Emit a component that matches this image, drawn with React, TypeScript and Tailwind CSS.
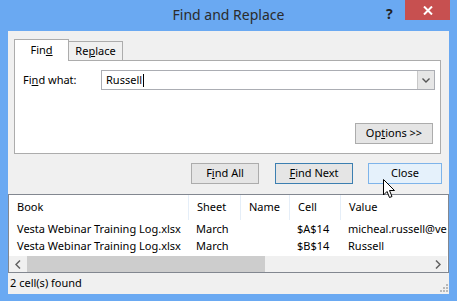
import React from "react";

const rows = [
  { book: "Vesta Webinar Training Log.xlsx", sheet: "March", name: "", cell: "$A$14", value: "micheal.russell@vesta.com" },
  { book: "Vesta Webinar Training Log.xlsx", sheet: "March", name: "", cell: "$B$14", value: "Russell" },
];

const cols = [
  { label: "Book", w: "w-[180px]" },
  { label: "Sheet", w: "w-[52px]" },
  { label: "Name", w: "w-[49px]" },
  { label: "Cell", w: "w-[51px]" },
  { label: "Value", w: "w-[120px]" },
];

const FindReplace: React.FC = () => {
  return (
    <div className="w-[457px] h-[301px] bg-[#6aa9f2] flex flex-col font-['Noto_Sans',sans-serif] text-[11px] text-black overflow-hidden">
      {/* Title bar */}
      <div className="relative h-[31px] flex items-center justify-center">
        <span className="text-[14px] text-[#2b2b2b] pb-[2px]">Find and Replace</span>
        <span className="absolute left-[386px] top-[3px] text-[14px] font-bold text-[#222]">?</span>
        <div className="absolute left-[405px] top-0 w-[45px] h-[20px] bg-[#c75050] flex items-center justify-center">
          <svg width="10" height="9" viewBox="0 0 10 9">
            <path d="M1 0.5 L9 8.5 M9 0.5 L1 8.5" stroke="white" strokeWidth="2" />
          </svg>
        </div>
      </div>

      {/* Client area */}
      <div className="mx-[8px] mb-[7px] flex-1 bg-[#f0f0f0] flex flex-col">
        {/* Tabs */}
        <div className="flex items-end ml-[6px] mt-[7px] mr-[8px]">
          <div className="w-[55px] h-[22px] bg-white border border-b-0 border-[#acacac] flex items-center justify-center relative top-[1px] z-10">
            <span>Fin<u>d</u></span>
          </div>
          <div className="w-[54px] h-[19px] bg-[#f0f0f0] border border-l-0 border-b-0 border-[#acacac] flex items-center justify-center">
            <span>Re<u>p</u>lace</span>
          </div>
        </div>
        <div className="ml-[6px] mr-[8px] h-[94px] bg-white border border-[#acacac] flex flex-col">
          <div className="flex items-center mt-[9px]">
            <span className="ml-[8px] w-[78px]">Fi<u>n</u>d what:</span>
            <div className="w-[334px] h-[20px] border border-[#abadb3] flex items-center bg-white">
              <span className="ml-[4px]">Russell</span>
              <span className="w-[1px] h-[13px] bg-black ml-[1px]" />
              <div className="ml-auto w-[17px] h-full bg-[#e6e6e6] border-l border-[#c8c8c8] flex items-center justify-center">
                <svg width="8" height="5" viewBox="0 0 8 5">
                  <path d="M0.5 0.5 L4 4 L7.5 0.5" stroke="#555" strokeWidth="1.4" fill="none" />
                </svg>
              </div>
            </div>
          </div>
          <div className="flex justify-end mt-[33px] mr-[7px]">
            <button className="w-[78px] h-[21px] bg-[#e5e5e5] border border-[#acacac] flex items-center justify-center">
              <span>Op<u>t</u>ions &gt;&gt;</span>
            </button>
          </div>
        </div>

        {/* Buttons */}
        <div className="flex mt-[9px] ml-[183px] gap-[16px] relative">
          <button className="w-[68px] h-[21px] bg-[#e5e5e5] border border-[#acacac] flex items-center justify-center">
            <span>F<u>i</u>nd All</span>
          </button>
          <button className="w-[78px] h-[21px] bg-[#e5e5e5] border border-[#3c7fb1] flex items-center justify-center">
            <span><u>F</u>ind Next</span>
          </button>
          <button className="-ml-[1px] w-[74px] h-[21px] bg-[#e5f1fb] border border-[#7eb4ea] flex items-center justify-center">
            <span>Close</span>
          </button>
          <svg className="absolute left-[192px] top-[16px]" width="14" height="21" viewBox="0 0 14 21">
            <path d="M0.5 0.5 L0.5 16 L4 12.5 L6.5 18.5 L9 17.5 L6.5 11.5 L11.5 11.5 Z" fill="white" stroke="black" strokeWidth="1" />
          </svg>
        </div>

        {/* Results */}
        <div className="mt-[10px] border border-[#828790] bg-white flex flex-col overflow-hidden">
          <div className="flex h-[25px] items-center">
            {cols.map((c, i) => (
              <div key={i} className={`${c.w} shrink-0 h-full flex items-center pl-[8px] ${i < cols.length - 1 ? "border-r border-[#e5eef8]" : ""}`}>
                {c.label}
              </div>
            ))}
          </div>
          <div className="mt-[1px] mr-[1px] overflow-hidden">
            {rows.map((r, i) => (
              <div key={i} className="flex h-[17px] items-center whitespace-nowrap">
                <div className="w-[180px] shrink-0 pl-[8px]">{r.book}</div>
                <div className="w-[52px] shrink-0 pl-[7px]">{r.sheet}</div>
                <div className="w-[49px] shrink-0 pl-[8px]">{r.name}</div>
                <div className="w-[51px] shrink-0 pl-[7px]">{r.cell}</div>
                <div className="w-[120px] shrink-0 pl-[7px]">{r.value}</div>
              </div>
            ))}
          </div>
          <div className="flex h-[16px] bg-[#f0f0f0] items-center mt-[1px] mr-[1px]">
            <div className="w-[18px] flex justify-center">
              <svg width="6" height="9" viewBox="0 0 6 9">
                <path d="M5 0.5 L1 4.5 L5 8.5" stroke="#606060" strokeWidth="1.5" fill="none" />
              </svg>
            </div>
            <div className="w-[238px] h-full bg-[#cdcdcd]" />
            <div className="ml-auto w-[18px] flex justify-center">
              <svg width="6" height="9" viewBox="0 0 6 9">
                <path d="M1 0.5 L5 4.5 L1 8.5" stroke="#606060" strokeWidth="1.5" fill="none" />
              </svg>
            </div>
          </div>
        </div>

        {/* Status bar */}
        <div className="flex-1 flex items-center relative">
          <span className="ml-[2px]">2 cell(s) found</span>
          <svg className="absolute right-[1px] bottom-[2px]" width="9" height="9" viewBox="0 0 9 9">
            <rect x="7" y="1" width="2" height="2" fill="#b8b8b8" />
            <rect x="4" y="4" width="2" height="2" fill="#b8b8b8" />
            <rect x="7" y="4" width="2" height="2" fill="#b8b8b8" />
            <rect x="1" y="7" width="2" height="2" fill="#b8b8b8" />
            <rect x="4" y="7" width="2" height="2" fill="#b8b8b8" />
            <rect x="7" y="7" width="2" height="2" fill="#b8b8b8" />
          </svg>
        </div>
      </div>
    </div>
  );
};

export default function App() {
  return <FindReplace />;
}
